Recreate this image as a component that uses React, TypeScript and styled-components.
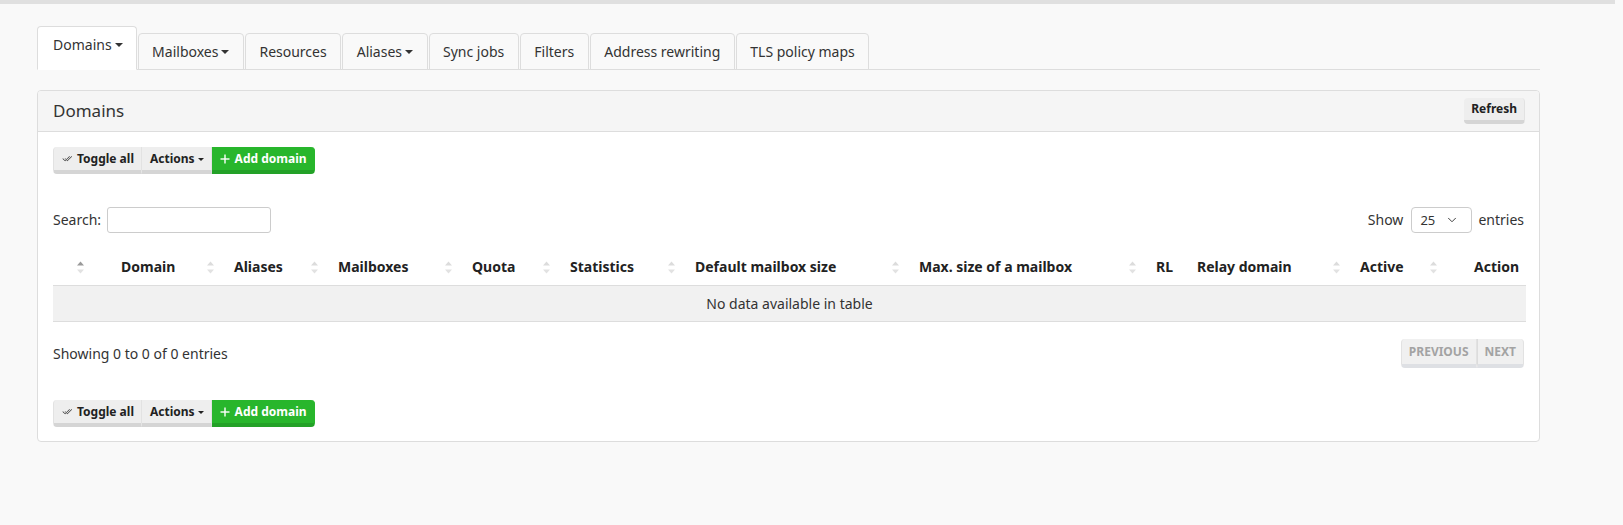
import React from "react";
import styled, { createGlobalStyle } from "styled-components";
import { ChevronDown } from "lucide-react";

const GlobalStyle = createGlobalStyle`
  * { box-sizing: border-box; }
  html, body {
    margin: 0;
    padding: 0;
    background: #f9f9f9;
  }
  body {
    font-family: "Noto Sans", "Open Sans", sans-serif;
    font-size: 14px;
    line-height: 20px;
    color: #333;
  }
`;

const TopBar = styled.div`
  height: 4px;
  margin-right: 8px;
  background: #e0e0e0;
`;

const Page = styled.div`
  width: 1503px;
  margin-left: 37px;
  padding-top: 22px;
`;

const TabList = styled.ul`
  display: flex;
  align-items: flex-end;
  list-style: none;
  margin: 0;
  padding: 0;
  border-bottom: 1px solid #ddd;
`;

const Tab = styled.li<{ $active?: boolean }>`
  display: flex;
  align-items: center;
  margin: 0 1px -1px 0;
  padding: ${(p) => (p.$active ? "8px 13px 14px 15px" : "8px 13.5px 7px")};
  border: 1px solid #ddd;
  border-bottom-color: ${(p) => (p.$active ? "#fff" : "#ddd")};
  border-radius: 4px 4px 0 0;
  background: ${(p) => (p.$active ? "#fff" : "#f9f9f9")};
  color: #333;
  font-size: 14px;
  line-height: 20px;
  white-space: nowrap;
`;

const Caret = styled.span<{ $size?: number; $gap?: number }>`
  display: inline-block;
  width: 0;
  height: 0;
  margin-left: ${(p) => p.$gap ?? 3}px;
  border-top: ${(p) => p.$size ?? 4}px solid currentColor;
  border-left: ${(p) => p.$size ?? 4}px solid transparent;
  border-right: ${(p) => p.$size ?? 4}px solid transparent;
`;

const Panel = styled.section`
  margin-top: 20px;
  background: #fff;
  border: 1px solid #ddd;
  border-radius: 4px;
`;

const PanelHeading = styled.div`
  display: flex;
  align-items: center;
  justify-content: space-between;
  padding: 10px 14px 10px 15px;
  background: #f5f5f5;
  border-bottom: 1px solid #ddd;
  border-radius: 3px 3px 0 0;
`;

const PanelTitle = styled.h3`
  margin: 0;
  font-size: 17px;
  font-weight: 400;
  line-height: 20px;
  color: #333;
`;

const PanelBody = styled.div`
  padding: 15px 15px 14px;
`;

const BtnGroup = styled.div<{ $top?: number }>`
  display: flex;
  margin-top: ${(p) => p.$top ?? 0}px;
`;

const Btn = styled.button<{ $variant?: "default" | "success"; $size?: "sm" | "group" }>`
  display: inline-flex;
  align-items: center;
  gap: 5px;
  font-family: inherit;
  font-size: 12px;
  font-weight: 700;
  line-height: 18px;
  padding: ${(p) => (p.$size === "sm" ? "2px 7px" : "3px 7px 2px 8px")};
  border-style: solid;
  border-width: 0 1px 4px 1px;
  border-radius: 0;
  cursor: pointer;
  background: ${(p) => (p.$variant === "success" ? "#28b62c" : "#eeeeee")};
  color: ${(p) => (p.$variant === "success" ? "#fff" : "#222")};
  border-color: ${(p) =>
    p.$variant === "success" ? "#28b62c #28b62c #23a127 #28b62c" : "#e2e2e2 #e2e2e2 #d5d5d5 #e2e2e2"};

  &:first-child {
    border-top-left-radius: 4px;
    border-bottom-left-radius: 4px;
  }
  &:last-child {
    border-top-right-radius: 4px;
    border-bottom-right-radius: 4px;
  }
  &:not(:first-child) {
    border-left-width: 0;
  }
`;

const RefreshBtn = styled(Btn)`
  margin: -3px 0;
  border-radius: 4px;
`;

const ControlRow = styled.div`
  display: flex;
  align-items: center;
  justify-content: space-between;
  margin-top: 33px;
`;

const Label = styled.label`
  display: flex;
  align-items: center;
  gap: 6px;
  font-size: 14px;
  color: #333;
`;

const SearchInput = styled.input`
  width: 164px;
  height: 26px;
  border: 1px solid #ccc;
  border-radius: 3px;
  background: #fff;
  font-family: inherit;
  font-size: 13px;
  padding: 0 6px;
`;

const SelectBox = styled.div`
  display: flex;
  align-items: center;
  justify-content: space-between;
  width: 61px;
  height: 26px;
  margin-left: 2px;
  padding: 0 12px 0 8px;
  border: 1px solid #ccc;
  border-radius: 4px;
  background: #fff;
  font-size: 13px;
  color: #333;
`;

const Table = styled.table`
  width: 100%;
  margin-top: 16px;
  border-collapse: collapse;
  table-layout: fixed;
`;

const Th = styled.th<{ $align?: "left" | "right" }>`
  position: relative;
  padding: 8px ${(p) => (p.$align === "right" ? "7px" : "10px")} 8px 10px;
  text-align: ${(p) => p.$align ?? "left"};
  font-size: 14px;
  font-weight: 700;
  line-height: 20px;
  color: #222;
  border-bottom: 1px solid #ddd;
  white-space: nowrap;
`;

const EmptyCell = styled.td`
  padding: 8px 10px 7px;
  text-align: center;
  background: #f1f1f1;
  border-bottom: 1px solid #ddd;
  color: #333;
`;

const SortIcon = styled.svg<{ $left?: number }>`
  position: absolute;
  ${(p) => (p.$left !== undefined ? `left: ${p.$left}px;` : "right: 10px;")}
  top: 50%;
  margin-top: -6px;
  width: 7px;
  height: 13px;
`;

const FooterRow = styled.div`
  display: flex;
  align-items: center;
  justify-content: space-between;
  margin-top: 17px;
`;

const Pager = styled.div`
  display: flex;
`;

const PageBtn = styled.span`
  padding: 4px 7px 3px;
  font-size: 12px;
  font-weight: 700;
  line-height: 18px;
  text-transform: uppercase;
  color: #a3a3a3;
  background: #f0f0f0;
  border-style: solid;
  border-width: 0 1px 4px 1px;
  border-color: #e2e2e2 #e2e2e2 #dee0e4;

  &:first-child {
    border-radius: 4px 0 0 4px;
  }
  &:last-child {
    border-radius: 0 4px 4px 0;
    border-left-color: #dcdcdc;
  }
`;

const Sorter = ({ active, left }: { active?: boolean; left?: number }) => (
  <SortIcon viewBox="0 0 7 13" $left={left}>
    <polygon points="0,4.5 3.5,0.5 7,4.5" fill={active ? "#9a9a9a" : "#dcdcdc"} />
    <polygon points="0,8.5 3.5,12.5 7,8.5" fill="#e2e2e2" />
  </SortIcon>
);

const CheckAll = () => (
  <svg width="10" height="10" viewBox="0 0 16 16" fill="#222">
    <path d="M12.354 4.354a.5.5 0 0 0-.708-.708L5 10.293 1.854 7.146a.5.5 0 1 0-.708.708l3.5 3.5a.5.5 0 0 0 .708 0l7-7zm-4.208 7-.896-.897.707-.707.543.543 6.646-6.647a.5.5 0 0 1 .708.708l-7 7a.5.5 0 0 1-.708 0z" />
    <path d="m5.354 7.146.896.897-.707.707-.897-.896a.5.5 0 1 1 .708-.708z" />
  </svg>
);

const PlusIcon = () => (
  <svg width="10" height="10" viewBox="0 0 10 10" stroke="#fff" strokeWidth="1.4">
    <line x1="5" y1="0.5" x2="5" y2="9.5" />
    <line x1="0.5" y1="5" x2="9.5" y2="5" />
  </svg>
);

const tabs = [
  { label: "Domains", caret: true, active: true },
  { label: "Mailboxes", caret: true },
  { label: "Resources" },
  { label: "Aliases", caret: true },
  { label: "Sync jobs" },
  { label: "Filters" },
  { label: "Address rewriting" },
  { label: "TLS policy maps" },
];

type Column = {
  label: string;
  width: number;
  sort?: boolean;
  active?: boolean;
  iconLeft?: number;
  align?: "right";
};

const columns: Column[] = [
  { label: "", width: 58, sort: true, active: true, iconLeft: 24 },
  { label: "Domain", width: 113, sort: true },
  { label: "Aliases", width: 104, sort: true },
  { label: "Mailboxes", width: 134, sort: true },
  { label: "Quota", width: 98, sort: true },
  { label: "Statistics", width: 125, sort: true },
  { label: "Default mailbox size", width: 224, sort: true },
  { label: "Max. size of a mailbox", width: 237, sort: true },
  { label: "RL", width: 41 },
  { label: "Relay domain", width: 163, sort: true },
  { label: "Active", width: 97, sort: true },
  { label: "Action", width: 79, align: "right" },
];

const DomainActions = ({ top }: { top?: number }) => (
  <BtnGroup $top={top}>
    <Btn $size="group">
      <CheckAll />
      Toggle all
    </Btn>
    <Btn $size="group">
      Actions
      <Caret $size={3} $gap={-2} />
    </Btn>
    <Btn $size="group" $variant="success">
      <PlusIcon />
      Add domain
    </Btn>
  </BtnGroup>
);

export default function App() {
  return (
    <>
      <GlobalStyle />
      <TopBar />
      <Page>
        <TabList>
          {tabs.map((t) => (
            <Tab key={t.label} $active={t.active}>
              {t.label}
              {t.caret && <Caret />}
            </Tab>
          ))}
        </TabList>

        <Panel>
          <PanelHeading>
            <PanelTitle>Domains</PanelTitle>
            <RefreshBtn $size="sm">Refresh</RefreshBtn>
          </PanelHeading>
          <PanelBody>
            <DomainActions />

            <ControlRow>
              <Label>
                Search:
                <SearchInput type="text" />
              </Label>
              <Label>
                Show
                <SelectBox>
                  25
                  <ChevronDown size={14} strokeWidth={1.6} color="#333" />
                </SelectBox>
                entries
              </Label>
            </ControlRow>

            <Table>
              <colgroup>
                {columns.map((c, i) => (
                  <col key={i} style={{ width: c.width }} />
                ))}
              </colgroup>
              <thead>
                <tr>
                  {columns.map((c, i) => (
                    <Th key={i} $align={c.align}>
                      {c.label}
                      {c.sort && <Sorter active={c.active} left={c.iconLeft} />}
                    </Th>
                  ))}
                </tr>
              </thead>
              <tbody>
                <tr>
                  <EmptyCell colSpan={columns.length}>No data available in table</EmptyCell>
                </tr>
              </tbody>
            </Table>

            <FooterRow>
              <span>Showing 0 to 0 of 0 entries</span>
              <Pager>
                <PageBtn>Previous</PageBtn>
                <PageBtn>Next</PageBtn>
              </Pager>
            </FooterRow>

            <DomainActions top={32} />
          </PanelBody>
        </Panel>
      </Page>
    </>
  );
}
